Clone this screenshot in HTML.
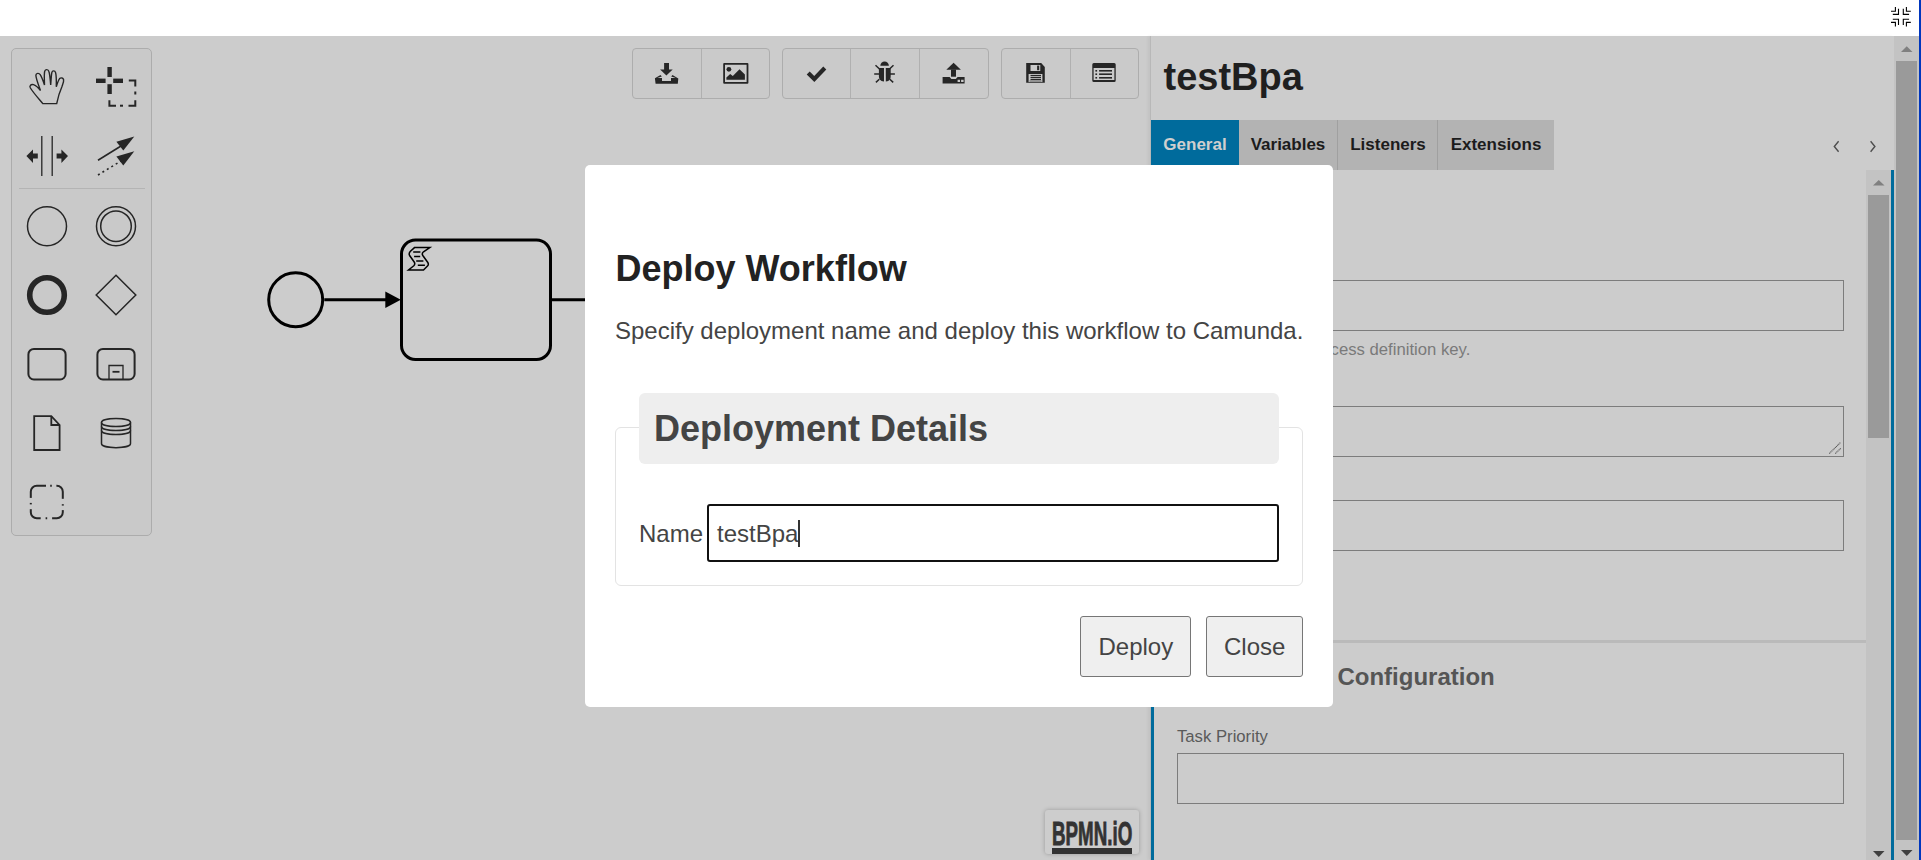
<!DOCTYPE html>
<html><head><meta charset="utf-8">
<style>
*{box-sizing:border-box}
html,body{margin:0;padding:0;width:1921px;height:860px;overflow:hidden;background:#fff;font-family:"Liberation Sans",sans-serif}
.abs{position:absolute}
#canvas{position:absolute;left:0;top:36px;width:1150px;height:824px;background:#cccccc}
#palette{position:absolute;left:11px;top:48px;width:141px;height:488px;background:#c9c9c9;border:1px solid #acacac;border-radius:3px}
.tbgrp{position:absolute;top:48px;height:51px;border:1px solid #adadad;border-radius:4px;background:#cacaca}
.tbsep{position:absolute;top:0;bottom:0;width:1px;background:#b0b0b0}
#panel{position:absolute;left:1150px;top:36px;width:744px;height:824px;background:#cccccc;border-left:1px solid #b8b8b8;box-shadow:-2px 0 3px rgba(0,0,0,0.05)}
.tab{position:absolute;top:120px;height:50px;background:#b3b3b3;color:#1c1c1c;font-weight:bold;font-size:17px;line-height:50px;text-align:center}
.pinput{position:absolute;border:1px solid #7c7c7c;background:#cccccc}
#modal{position:absolute;left:585px;top:165px;width:748px;height:542px;background:#fff;border-radius:5px}
.txt{position:absolute;white-space:pre;line-height:1}
</style></head>
<body>
<!-- top bar compress icon -->
<svg class="abs" style="left:0;top:0" width="1921" height="36" viewBox="0 0 1921 36">
  <g stroke="#000" stroke-width="1.1" fill="none">
    <path d="M1891 11.3H1895.4V7.1M1892.8 14.4H1898.5V8.7"/>
    <path d="M1910.8 11.3H1906.4V7.1M1909.1 14.4H1903.3V8.7"/>
    <path d="M1891 22.4H1895.4V26.6M1892.8 19.2H1898.5V25.1"/>
    <path d="M1910.8 22.4H1906.4V26.6M1909.1 19.2H1903.3V25.1"/>
  </g>
</svg>

<div id="canvas"></div>
<div id="palette" style="border-radius:5px"></div>

<div class="tbgrp" style="left:632px;width:138px"><div class="tbsep" style="left:68px"></div></div>
<div class="tbgrp" style="left:782px;width:207px"><div class="tbsep" style="left:67px"></div><div class="tbsep" style="left:136px"></div></div>
<div class="tbgrp" style="left:1001px;width:138px"><div class="tbsep" style="left:68px"></div></div>

<!-- canvas svg: palette icons, toolbar icons, diagram -->
<svg class="abs" style="left:0;top:0" width="1150" height="860" viewBox="0 0 1150 860">
  <!-- palette -->
  <g fill="none" stroke="#262626" stroke-width="1.5">
    <!-- hand -->
    <path d="M42.8 103.6H56.7C57.6 99 59.5 92 61.9 86.7C62.8 84 64 81.5 63.6 79.6C63.2 78 61 77.3 59.6 78.6C58.5 79.8 57.3 83.5 56.3 86.7C56.4 81 56.5 76 55.6 72.6C54.9 70.3 52.3 70.3 51.8 72.6C51.2 76 51 81 50.7 84.9C50.3 80 49.8 74 48.9 71.5C48.2 69.2 45.5 69 44.7 71.3C44 74 44.4 80 44.5 84.9C43 80.5 41.5 76.5 40.2 74.6C39 72.8 36.2 73 35.9 75.2C35.8 78 38.5 85 40.5 90.5C38.5 88 36 85.3 33.5 84.6C31 84 29 85.5 30.4 88C33.5 93 39 99 42.8 103.6Z" stroke-width="1.4"/>
    <!-- space tool lines -->
    <path d="M41.8 136V176M52.2 136V176" stroke-width="1.3"/>
    <!-- connect lines -->
    <path d="M98 160.2L121 146" stroke-width="1.6"/>
    <path d="M98 175L121 161" stroke-width="1.6" stroke-dasharray="2 3.2"/>
    <!-- start -->
    <circle cx="47" cy="226.2" r="19.5"/>
    <!-- intermediate -->
    <circle cx="116" cy="226.2" r="19.5"/>
    <circle cx="116" cy="226.2" r="15.3"/>
    <!-- end -->
    <circle cx="47" cy="295" r="17.3" stroke-width="5.6"/>
    <!-- gateway -->
    <path d="M116 275.3L135.8 295L116 314.7L96.2 295Z"/>
    <!-- task -->
    <rect x="28.4" y="348.9" width="37.2" height="30.6" rx="5.5" stroke-width="2"/>
    <!-- subprocess -->
    <rect x="97.4" y="348.9" width="37.2" height="30.6" rx="5.5" stroke-width="2"/>
    <path d="M109 380V365.5H123V380" stroke-width="1.3"/>
    <path d="M112.5 371.8H119.5" stroke-width="1.8"/>
    <!-- data object -->
    <path d="M34.2 416.2H51.3L59.6 425V450H34.2Z" stroke-width="1.8"/>
    <path d="M51.3 416.2V425H59.6" stroke-width="1.8"/>
    <!-- data store -->
    <path d="M101.5 422.5C101.5 417.2 130.5 417.2 130.5 422.5V443.5C130.5 449 101.5 449 101.5 443.5Z"/>
    <path d="M101.5 422.5C101.5 427.8 130.5 427.8 130.5 422.5M101.5 426.5C101.5 431.8 130.5 431.8 130.5 426.5M101.5 430.5C101.5 435.8 130.5 435.8 130.5 430.5"/>
    <!-- group -->
    <rect x="30.8" y="485.8" width="32" height="32.5" rx="6" stroke-width="2"/>
    <g fill="#c9c9c9" stroke="none">
      <rect x="46" y="484" width="4.2" height="4"/><rect x="51.8" y="484" width="4.6" height="4"/>
      <rect x="61" y="498.8" width="4" height="5.4"/><rect x="61" y="505.6" width="4" height="4.5"/>
      <rect x="40.7" y="516.5" width="4.9" height="4"/><rect x="47.2" y="516.5" width="4.9" height="4"/>
      <rect x="29" y="497.9" width="4" height="5"/><rect x="29" y="504.4" width="4" height="4.8"/>
    </g>
    <!-- separator -->
    <path d="M19 188.5H145" stroke="#b4b4b4" stroke-width="1"/>
  </g>
  <g fill="#262626">
    <!-- lasso -->
    <rect x="96" y="78.6" width="9.6" height="4.4"/>
    <rect x="113.2" y="78.6" width="9.8" height="4.4"/>
    <rect x="107.4" y="67" width="4.4" height="10"/>
    <rect x="107.4" y="84.2" width="4.4" height="9.8"/>
    <path d="M128.8 79.6H136.3V86.5H134.3V81.6H128.8Z"/>
    <rect x="134.3" y="91.5" width="2" height="3"/>
    <path d="M136.3 100.2V106.7H128.5V104.7H134.3V100.2Z"/>
    <rect x="120" y="104.7" width="3" height="2"/>
    <path d="M108.4 100.2V106.7H116V104.7H110.4V100.2Z"/>
    <!-- space tool arrows -->
    <path d="M26.4 156L33 149.4V153.6H37.8V158.4H33V162.9Z"/>
    <path d="M68 156L61.4 149.4V153.6H56.6V158.4H61.4V162.9Z"/>
    <!-- connect heads -->
    <path d="M134.3 136.4L116.4 141.7L123.3 150.6Z"/>
    <path d="M134.3 151.2L116.4 156.5L123.3 165.4Z"/>
  </g>

  <!-- toolbar icons -->
  <g fill="#262626">
    <!-- download -->
    <rect x="664.1" y="63" width="4.9" height="7"/>
    <path d="M660.1 69.5H672.7L666.4 75.4Z"/>
    <path d="M660.5 75L661.8 76.6L657.2 78.1H662V81H671V78.1H675.8L671.2 76.6L672.5 75L678.3 78.5L677.8 83.8H655.6L654.9 78.3Z"/>
    <!-- picture -->
    <path fill-rule="evenodd" d="M724.2 62.9H747.4Q748.4 62.9 748.4 63.9V82.8Q748.4 83.8 747.4 83.8H724.2Q723.2 83.8 723.2 82.8V63.9Q723.2 62.9 724.2 62.9ZM725 64.8V82H746.6V64.8Z"/>
    <circle cx="728.9" cy="69.3" r="2.4"/>
    <path d="M726.4 77.5L730.2 73.9L732.8 76.1L739.5 69.3L744.9 74.4V79.8H726.4Z"/>
    <!-- bug -->
    <path d="M880.3 65.7A4.3 4.3 0 0 1 888.9 65.7Z"/>
    <path d="M878.9 68.1H884V81.6C880 81 878.9 79 878.9 76Z"/>
    <path d="M885.8 68.1H890.7V76C890.7 79 889.7 81 885.8 81.6Z"/>
  </g>
  <g stroke="#262626" fill="none">
    <path d="M808.2 73L814.3 79L824.8 68" stroke-width="4.2" stroke-linejoin="miter"/>
    <path d="M875.5 65.3L879.5 69M874.2 74H879M875.9 82.4L879.3 79.2M893.5 65.3L889.5 69M894.9 74H890M893.2 82.4L889.8 79.2" stroke-width="1.5"/>
  </g>
  <g fill="#262626">
    <!-- upload -->
    <path d="M953.6 62.7L960.9 69.7H946.3Z"/>
    <rect x="951" y="69.5" width="5" height="7.2"/>
    <path fill-rule="evenodd" d="M942.6 77H949.6L951.4 78.9H955.8L957.6 77H964.6V83.6H942.6ZM957.6 79.8V82.1H960V79.8ZM961.1 79.8V82.1H963.6V79.8Z"/>
    <!-- save -->
    <path fill-rule="evenodd" d="M1026.2 63.1H1041.2L1044.8 66.9V82.8H1026.2ZM1030.5 65V70.9H1040.3V65ZM1028.6 73.9V81.9H1042.4V73.9Z"/>
    <rect x="1037.1" y="65.6" width="2.1" height="4.6"/>
    <rect x="1030.5" y="74.9" width="10.5" height="1.2"/>
    <rect x="1030.5" y="76.9" width="10.5" height="1.2"/>
    <rect x="1030.5" y="78.9" width="10.5" height="1.2"/>
    <rect x="1029.5" y="80.2" width="12" height="1.7" fill="#8a8a8a"/>
    <!-- list -->
    <path fill-rule="evenodd" d="M1093.8 63.1H1114.2Q1115.7 63.1 1115.7 64.6V80.4Q1115.7 81.9 1114.2 81.9H1093.8Q1092.3 81.9 1092.3 80.4V64.6Q1092.3 63.1 1093.8 63.1ZM1093.6 67.9V80H1114.4V67.9Z"/>
    <rect x="1095.4" y="70" width="1.7" height="1.6"/>
    <rect x="1095.4" y="73.4" width="1.7" height="1.6"/>
    <rect x="1095.4" y="77" width="1.7" height="1.6"/>
    <rect x="1099.1" y="70" width="12.9" height="1.6"/>
    <rect x="1099.1" y="73.4" width="12.9" height="1.6"/>
    <rect x="1099.1" y="77" width="12.9" height="1.6"/>
  </g>

  <!-- diagram -->
  <g stroke="#000" stroke-width="3" fill="none">
    <circle cx="295.7" cy="299.8" r="27"/>
    <path d="M324.3 299.8H387"/>
    <rect x="401.5" y="240" width="149" height="119.5" rx="14"/>
    <path d="M551 299.8H586"/>
  </g>
  <path d="M385.3 291.5L400.8 299.8L385.3 308.1Z" fill="#000"/>
  <!-- script icon -->
  <g stroke="#000" fill="none">
    <path d="M414.5 247.6H429.8L423.5 251.8Q421.5 253.5 422.8 255.5L427.8 262.5Q429 264.5 427.5 266L423.5 270H408.5L413.8 265.8Q415.5 264 414.2 262L409.6 255.5Q408.5 253.5 410.2 251.5Z" stroke-width="1.5" stroke-linejoin="miter"/>
    <path d="M413.2 251.9H420.4M414.1 256.4H420.2M416.2 261H423.4M417.8 265.3H424.9" stroke-width="1.5"/>
  </g>
</svg>

<!-- bpmn.io logo -->
<div class="abs" style="left:1045px;top:810px;width:94px;height:44px;background:#cdcdcd;border-radius:3px;box-shadow:0 0 4px rgba(0,0,0,0.25)"></div>
<div class="txt" style="left:1051.5px;top:816.5px;font-size:33.5px;font-weight:bold;color:#333;transform:scaleX(0.56);transform-origin:0 0;-webkit-text-stroke:0.9px #333">BPMN.iO</div>
<div class="abs" style="left:1052px;top:848px;width:80px;height:6px;background:#333"></div>

<div id="panel"></div>
<div class="txt" style="left:1163.5px;top:58px;font-size:38px;font-weight:bold;color:#1f1f1f">testBpa</div>
<div class="tab" style="left:1151px;width:88px;background:#006b9c;color:#cfcfcf">General</div>
<div class="tab" style="left:1239px;width:98px">Variables</div>
<div class="tab" style="left:1337px;width:1px;background:#a0a0a0"></div>
<div class="tab" style="left:1338px;width:100px">Listeners</div>
<div class="tab" style="left:1437px;width:1px;background:#a0a0a0"></div>
<div class="tab" style="left:1438px;width:116px">Extensions</div>
<svg class="abs" style="left:1825px;top:135px" width="60" height="24"><path d="M13.6 6.3L9.3 11.5L13.6 16.7M45.6 6.3L49.9 11.5L45.6 16.7" stroke="#4d4d4d" stroke-width="1.4" fill="none"/></svg>

<!-- panel content -->
<div class="pinput" style="left:1177px;top:280px;width:667px;height:51px"></div>
<div class="txt" style="left:1178.5px;top:342px;font-size:16.7px;color:#7a7a7a">This maps to the process definition key.</div>
<div class="pinput" style="left:1177px;top:406px;width:667px;height:51px"></div>
<svg class="abs" style="left:1820px;top:430px" width="30" height="30"><path d="M9.3 23.5L20.7 12.3M15.3 23.5L20.7 18.4" stroke="#505050" stroke-width="1.1" stroke-dasharray="1 0.6" fill="none"/></svg>
<div class="pinput" style="left:1177px;top:500px;width:667px;height:51px"></div>
<div class="abs" style="left:1154px;top:640px;width:712px;height:3px;background:#bababa"></div>
<div class="txt" style="left:1176.5px;top:664.8px;font-size:24px;font-weight:bold;color:#555">External Task Configuration</div>
<div class="txt" style="left:1177px;top:729px;font-size:16.7px;color:#5a5a5a">Task Priority</div>
<div class="pinput" style="left:1177px;top:753px;width:667px;height:51px"></div>

<!-- inner scrollbar -->
<div class="abs" style="left:1866px;top:170px;width:25px;height:690px;background:#c3c3c3"></div>
<div class="abs" style="left:1868px;top:195px;width:21px;height:243px;background:#9a9a9a"></div>
<svg class="abs" style="left:1866px;top:170px" width="25" height="690"><path d="M7 15.5H18.5L12.75 10Z" fill="#808080"/><path d="M7 681H18.5L12.75 687Z" fill="#404040"/></svg>
<div class="abs" style="left:1151px;top:170px;width:3px;height:690px;background:#006b9c"></div>
<div class="abs" style="left:1891px;top:170px;width:3px;height:690px;background:#006b9c"></div>

<!-- outer scrollbar -->
<div class="abs" style="left:1894px;top:36px;width:25px;height:824px;background:#c3c3c3"></div>
<div class="abs" style="left:1896px;top:61px;width:21px;height:779px;background:#9a9a9a"></div>
<svg class="abs" style="left:1894px;top:36px" width="25" height="824"><path d="M7 16H18.5L12.75 10.2Z" fill="#808080"/><path d="M7 814H18.5L12.75 820Z" fill="#404040"/></svg>
<div class="abs" style="left:1919px;top:0;width:2px;height:860px;background:#0036bd"></div>

<!-- modal -->
<div id="modal"></div>
<div class="txt" style="left:615.5px;top:250.5px;font-size:36px;font-weight:bold;color:#222">Deploy Workflow</div>
<div class="txt" style="left:615px;top:318.5px;font-size:24px;color:#444">Specify deployment name and deploy this workflow to Camunda.</div>
<div class="abs" style="left:615px;top:427px;width:688px;height:159px;border:1px solid #e3e3e3;border-radius:6px"></div>
<div class="abs" style="left:639px;top:393px;width:640px;height:71px;background:#eeeeee;border-radius:6px"></div>
<div class="txt" style="left:654px;top:411px;font-size:36px;font-weight:bold;color:#444">Deployment Details</div>
<div class="txt" style="left:639px;top:521.5px;font-size:24px;color:#444">Name</div>
<div class="abs" style="left:707px;top:504px;width:572px;height:58px;border:2px solid #111;border-radius:3px"></div>
<div class="txt" style="left:717px;top:522px;font-size:24px;color:#444">testBpa</div>
<div class="abs" style="left:798px;top:520px;width:1.6px;height:27px;background:#333"></div>
<div class="abs" style="left:1080px;top:616px;width:111px;height:61px;border:1px solid #767676;border-radius:3px;background:#efefef"></div>
<div class="txt" style="left:1098.5px;top:635px;font-size:24px;color:#444">Deploy</div>
<div class="abs" style="left:1206px;top:616px;width:97px;height:61px;border:1px solid #767676;border-radius:3px;background:#efefef"></div>
<div class="txt" style="left:1224px;top:635px;font-size:24px;color:#444">Close</div>
</body></html>
